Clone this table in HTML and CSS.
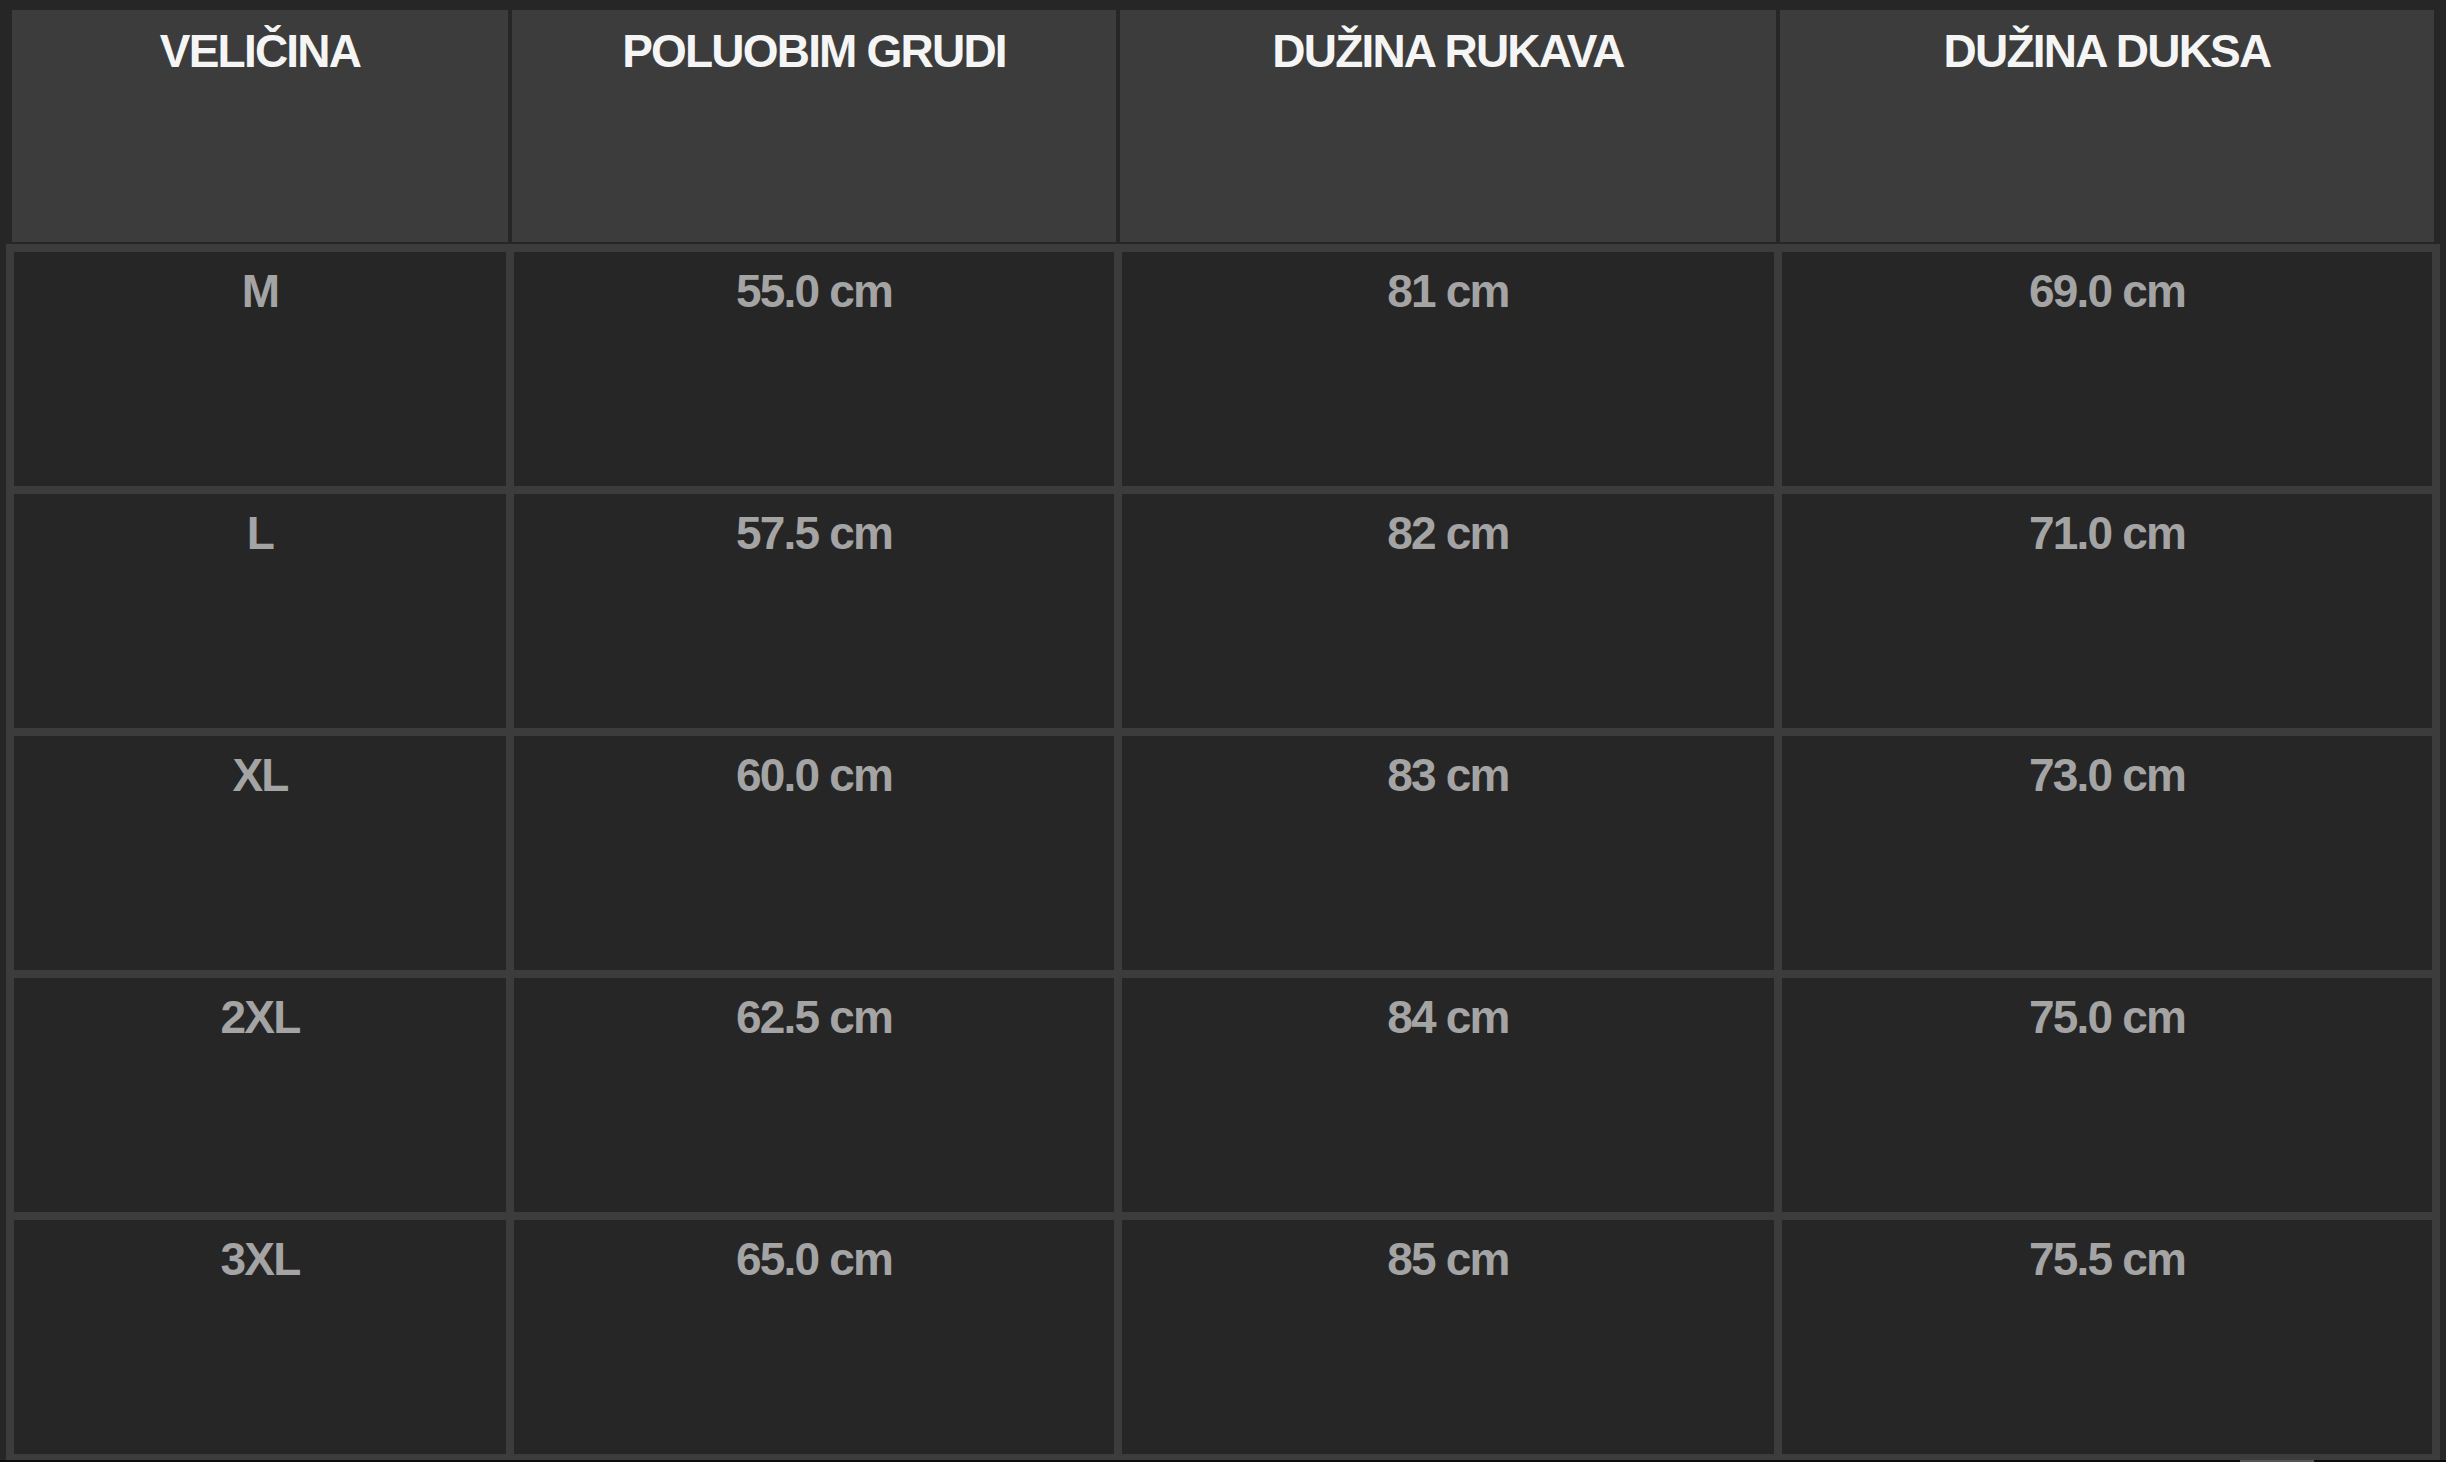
FILE: index.html
```html
<!DOCTYPE html>
<html lang="sr">
<head>
<meta charset="utf-8">
<title>Tabela veličina</title>
<link rel="stylesheet" href="styles.css">
</head>
<body>
<div class="page">
  <div class="head-row">
    <div class="hcell">VELIČINA</div>
    <div class="hcell">POLUOBIM GRUDI</div>
    <div class="hcell">DUŽINA RUKAVA</div>
    <div class="hcell">DUŽINA DUKSA</div>
  </div>
  <div class="body-grid">
    <div class="cell">M</div><div class="cell">55.0 cm</div><div class="cell">81 cm</div><div class="cell">69.0 cm</div>
    <div class="cell">L</div><div class="cell">57.5 cm</div><div class="cell">82 cm</div><div class="cell">71.0 cm</div>
    <div class="cell">XL</div><div class="cell">60.0 cm</div><div class="cell">83 cm</div><div class="cell">73.0 cm</div>
    <div class="cell">2XL</div><div class="cell">62.5 cm</div><div class="cell">84 cm</div><div class="cell">75.0 cm</div>
    <div class="cell">3XL</div><div class="cell">65.0 cm</div><div class="cell">85 cm</div><div class="cell">75.5 cm</div>
  </div>
</div>
<div class="scrollbar"><div class="thumb"></div></div>
</body>
</html>
```

FILE: styles.css
```css
html, body {
  margin: 0;
  padding: 0;
  background: #262626;
  overflow: hidden;
}

.page {
  width: 2446px;
  height: 1462px;
  font-family: "Liberation Sans", Arial, Helvetica, sans-serif;
  font-weight: 700;
  font-size: 46px;
  letter-spacing: -1.8px;
  line-height: 1.15;
}

.head-row {
  display: grid;
  grid-template-columns: 496px 604px 656px 654px;
  grid-template-rows: 232px;
  column-gap: 4px;
  padding: 10px 0 0 12px;
}

.hcell {
  background: #3c3c3c;
  color: #f5f5f5;
  text-align: center;
  padding-top: 15px;
  box-sizing: border-box;
}

.body-grid {
  display: grid;
  grid-template-columns: 492px 600px 652px 650px;
  grid-auto-rows: 234px;
  gap: 8px;
  padding: 8px;
  margin: 2px 0 0 6px;
  width: 2434px;
  box-sizing: border-box;
  background: #3c3c3c;
}

.cell {
  background: #262626;
  color: #a4a4a4;
  text-align: center;
  padding-top: 13px;
  box-sizing: border-box;
}

.scrollbar {
  position: fixed;
  left: 0;
  right: 0;
  bottom: 0;
  height: 2px;
  background: #0c0c0c;
}

.thumb {
  position: absolute;
  left: 2240px;
  width: 74px;
  top: 0;
  height: 2px;
  background: #555555;
}
```
